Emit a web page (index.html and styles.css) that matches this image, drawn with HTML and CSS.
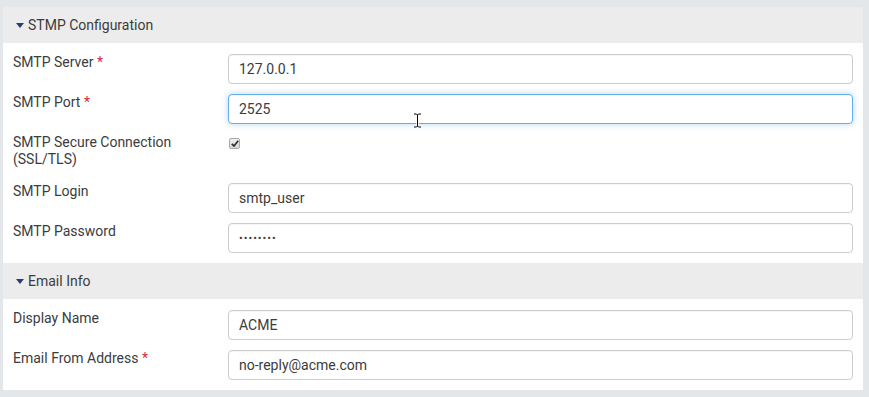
FILE: index.html
```html
<!DOCTYPE html>
<html>
<head>
  <title>Email Settings</title>
  <link rel="stylesheet" href="styles.css">
  <meta name="viewport" content="width=device-width, initial-scale=1.0">
</head>
<body>
  <div class="panel">
    <div class="section-head"><span class="caret"></span>STMP Configuration</div>
    <div class="section-body">
      <div class="row">
        <label class="row-label" for="server">SMTP Server <span class="req">*</span></label>
        <input type="text" id="server" class="text-input" value="127.0.0.1">
      </div>
      <div class="row">
        <label class="row-label" for="port">SMTP Port <span class="req">*</span></label>
        <input type="text" id="port" class="text-input focused" value="2525">
      </div>
      <div class="row">
        <label class="row-label">SMTP Secure Connection<br>(SSL/TLS)</label>
        <span class="check">
          <svg width="8" height="7" viewBox="0 0 8 7"><path d="M0.8 3.8 L3 6 L7.2 0.8" fill="none" stroke="#333" stroke-width="1.8"/></svg>
        </span>
      </div>
      <div class="row">
        <label class="row-label" for="login">SMTP Login</label>
        <input type="text" id="login" class="text-input" value="smtp_user">
      </div>
      <div class="row">
        <label class="row-label" for="password">SMTP Password</label>
        <input type="text" id="password" class="text-input dots" value="••••••••">
      </div>
    </div>
    <div class="section-head"><span class="caret"></span>Email Info</div>
    <div class="section-body">
      <div class="row">
        <label class="row-label" for="display">Display Name</label>
        <input type="text" id="display" class="text-input" value="ACME">
      </div>
      <div class="row">
        <label class="row-label" for="from">Email From Address <span class="req">*</span></label>
        <input type="text" id="from" class="text-input" value="no-reply@acme.com">
      </div>
    </div>
  </div>

  <!-- mouse cursor -->
  <svg class="ibeam" width="9" height="15" viewBox="0 0 9 15">
    <path d="M1 1 H3.5 L4.5 2 L5.5 1 H8 M4.5 2 V13 M1 14 H3.5 L4.5 13 L5.5 14 H8" fill="none" stroke="#fff" stroke-width="2.5"/>
    <path d="M1 1 H3.5 L4.5 2 L5.5 1 H8 M4.5 2 V13 M1 14 H3.5 L4.5 13 L5.5 14 H8" fill="none" stroke="#000" stroke-width="1"/>
  </svg>
</body>
</html>
```

FILE: styles.css
```css
body {
  margin: 0;
  padding: 7px 6px 7px 3px;
  background-color: #e4e7ea;
  font-family: Roboto, "Liberation Sans", sans-serif;
  font-size: 14px;
  color: #3c3c3c;
}
.panel {
  background-color: #ffffff;
}
.section-head {
  display: flex;
  align-items: center;
  height: 36px;
  padding-left: 13px;
  background-color: #ececec;
  color: #3c3c3c;
  font-size: 14px;
}
.caret {
  width: 0;
  height: 0;
  margin: 1px 4px 0 0;
  border-left: 4px solid transparent;
  border-right: 4px solid transparent;
  border-top: 5px solid #23406e;
}
.section-body {
  display: flex;
  flex-direction: column;
  gap: 10px;
  padding: 11px 10px 10px 10px;
}
.row {
  display: flex;
  align-items: flex-start;
  min-height: 30px;
}
.row-label {
  width: 215px;
  flex-shrink: 0;
  line-height: 17px;
  margin-bottom: 5px;
  color: #3c3c3c;
}
.req {
  color: #e0263c;
}
.text-input {
  flex: 1;
  height: 30px;
  padding: 0 10px;
  border: 1px solid #ccc;
  border-radius: 4px;
  box-sizing: border-box;
  font-family: Roboto, "Liberation Sans", sans-serif;
  font-size: 14px;
  color: #3c3c3c;
  box-shadow: inset 0 1px 1px rgba(0, 0, 0, 0.04);
  outline: none;
}
.text-input.focused {
  border-color: #66afe9;
  box-shadow: inset 0 1px 1px rgba(0, 0, 0, 0.05), 0 0 6px rgba(102, 175, 233, 0.5);
}
.text-input.dots {
  font-size: 11px;
  letter-spacing: 1px;
}
.check {
  display: flex;
  align-items: center;
  justify-content: center;
  width: 11px;
  height: 11px;
  margin: 4px 0 0 1px;
  border: 1px solid #a9a9a9;
  border-radius: 2px;
  box-sizing: border-box;
  background: linear-gradient(#f0f0f0, #d6d6d6);
}
.ibeam {
  position: absolute;
  left: 413px;
  top: 113px;
}
```
